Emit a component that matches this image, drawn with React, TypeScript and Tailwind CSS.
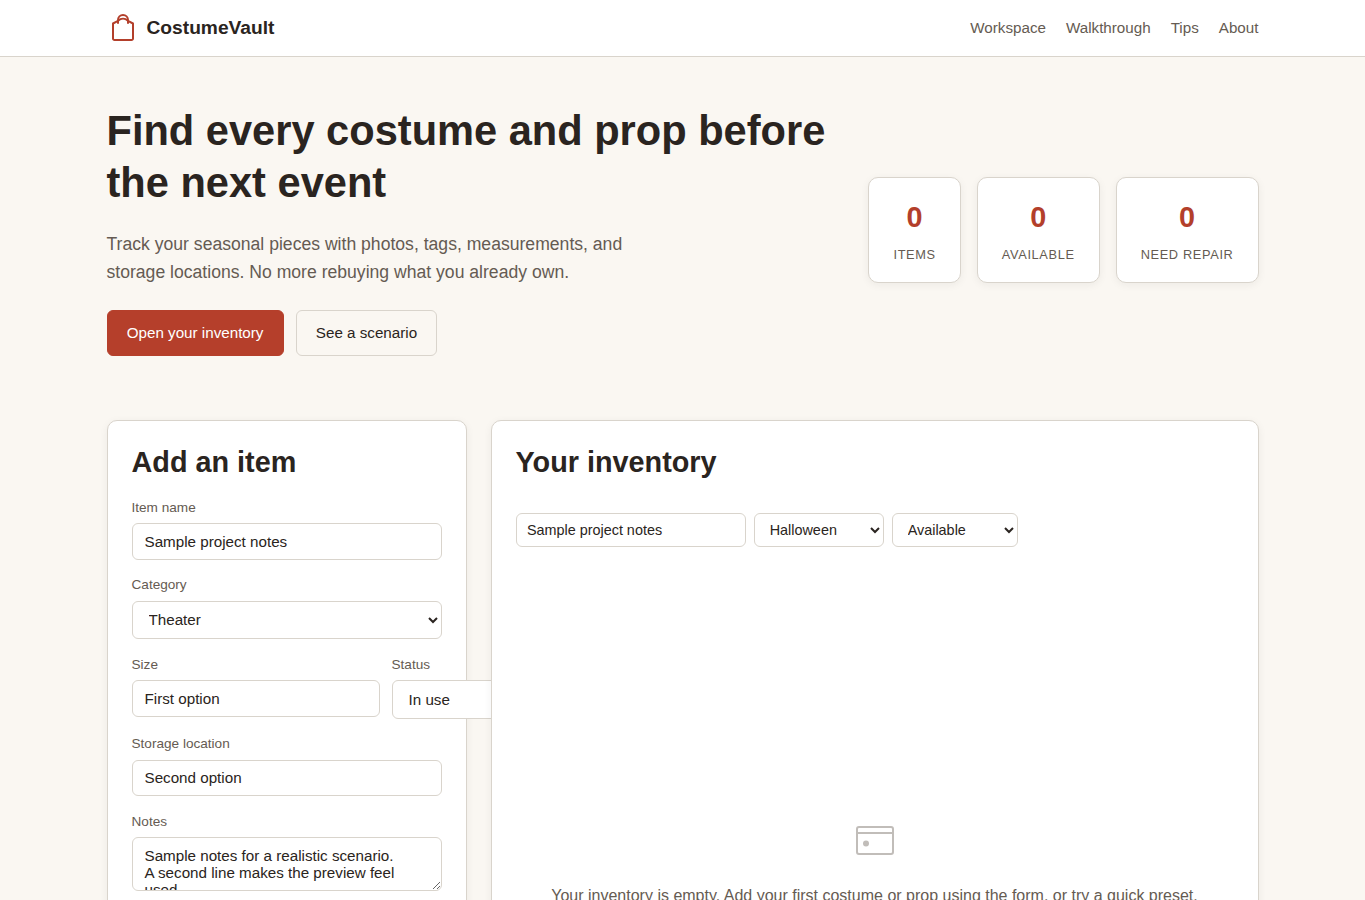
import type { ReactNode } from "react";

const navLinks = ["Workspace", "Walkthrough", "Tips", "About"];

const stats = [
  { value: 0, label: "Items" },
  { value: 0, label: "Available" },
  { value: 0, label: "Need repair" },
];

const inputClass =
  "block w-full rounded-md border border-[#d9d4cc] bg-white px-3 py-[8.8px] text-[15.2px] leading-[normal] text-[#2a2420] outline-none";

const filterClass =
  "h-[34px] rounded-md border border-[#d9d4cc] bg-white text-[14.4px] leading-[normal] text-[#2a2420] outline-none";

function BagIcon() {
  return (
    <svg width="32" height="32" viewBox="0 0 32 32" fill="none" stroke="#b33f2b" strokeWidth="2" strokeLinecap="round" strokeLinejoin="round">
      <path d="M6 11.5 L11 8.9 C14 6 18 6 21 8.9 L26 11.5 V26.5 a1.5 1.5 0 0 1 -1.5 1.5 H7.5 a1.5 1.5 0 0 1 -1.5 -1.5 Z" />
      <path d="M11 11 V8 a5 5 0 0 1 10 0 V11" />
    </svg>
  );
}

function EmptyIcon() {
  return (
    <svg className="opacity-40" width="64" height="64" viewBox="0 0 64 64" fill="none" stroke="#655b52" strokeWidth="2">
      <rect x="14" y="18" width="36" height="27" rx="2" />
      <path d="M14 24h36" />
      <circle cx="23" cy="34.5" r="3" fill="#655b52" stroke="none" />
    </svg>
  );
}

function Field({ label, children }: { label: string; children: ReactNode }) {
  return (
    <label className="block">
      <span className="mb-[4.5px] block pt-[0.3px] text-[13.6px] leading-[21.76px] text-[#655b52]">{label}</span>
      {children}
    </label>
  );
}

function Header() {
  return (
    <header className="h-[57px] border-b border-[#d9d4cc] bg-white">
      <div className="mx-auto flex h-14 max-w-[1200px] items-center justify-between px-6">
        <div className="flex items-center gap-2 text-[19.2px] font-bold">
          <BagIcon />
          <span>CostumeVault</span>
        </div>
        <nav className="flex gap-5 text-[15.2px] text-[#655b52]">
          {navLinks.map((link) => (
            <a key={link} href="#">{link}</a>
          ))}
        </nav>
      </div>
    </header>
  );
}

function Hero() {
  return (
    <section className="flex items-center justify-between gap-10 pt-12 pb-16">
      <div className="flex-1">
        <h1 className="mb-[20.7px] text-[41.6px] leading-[52px] font-bold">
          Find every costume and prop before the next event
        </h1>
        <p className="mb-6 max-w-[540px] text-[17.6px] leading-[28px] text-[#655b52]">
          Track your seasonal pieces with photos, tags, measurements, and storage locations. No more rebuying what you already own.
        </p>
        <div className="flex gap-3 text-[15.2px]">
          <button className="h-[46px] rounded-md border border-[#b53f2b] bg-[#b53f2b] px-[19.2px] pt-px text-white">Open your inventory</button>
          <button className="h-[46px] rounded-md border border-[#d9d4cc] px-[19.2px] pt-px">See a scenario</button>
        </div>
      </div>
      <div className="flex gap-4">
        {stats.map((stat) => (
          <div key={stat.label} className="flex h-[106px] flex-col items-center rounded-[10px] border border-[#d9d4cc] bg-white px-6 pt-[16.5px] shadow-[0_2px_8px_rgba(42,36,32,0.06)]">
            <span className="text-[28.8px] leading-[45px] font-bold text-[#b33f2b]">{stat.value}</span>
            <span className="mt-[5px] text-[12.8px] leading-5 tracking-[0.64px] whitespace-nowrap text-[#655b52] uppercase">{stat.label}</span>
          </div>
        ))}
      </div>
    </section>
  );
}

function ItemForm() {
  return (
    <section className="h-[720px] w-[360px] shrink-0 rounded-[10px] border border-[#d9d4cc] bg-white p-6 shadow-[0_2px_8px_rgba(42,36,32,0.06)]">
      <h2 className="mb-[17.3px] pt-[0.5px] text-[28.8px] leading-[34px] font-bold">Add an item</h2>
      <form className="flex flex-col gap-[14.4px]">
        <Field label="Item name">
          <input className={inputClass} defaultValue="Sample project notes" />
        </Field>
        <Field label="Category">
          <select className={inputClass} defaultValue="Theater">
            <option>Theater</option>
            <option>Halloween</option>
          </select>
        </Field>
        <div className="grid grid-cols-[248px_248px] gap-3">
          <Field label="Size">
            <input className={inputClass} defaultValue="First option" />
          </Field>
          <Field label="Status">
            <select className={inputClass} defaultValue="In use">
              <option>In use</option>
              <option>Available</option>
            </select>
          </Field>
        </div>
        <Field label="Storage location">
          <input className={inputClass} defaultValue="Second option" />
        </Field>
        <Field label="Notes">
          <textarea
            className={`${inputClass} h-[54px] resize-y overflow-hidden`}
            defaultValue={"Sample notes for a realistic scenario.\nA second line makes the preview feel used."}
          />
        </Field>
      </form>
    </section>
  );
}

function Inventory() {
  return (
    <section className="relative z-10 h-[720px] flex-1 rounded-[10px] border border-[#d9d4cc] bg-white p-6 shadow-[0_2px_8px_rgba(42,36,32,0.06)]">
      <h2 className="pt-[0.5px] text-[28.8px] leading-[34px] font-bold">Your inventory</h2>
      <div className="mt-[34px] flex gap-2">
        <input className={`${filterClass} w-[230px] px-[10.4px]`} defaultValue="Sample project notes" />
        <select className={`${filterClass} w-[130px] pr-[10.4px] pl-[11.2px]`} defaultValue="Halloween">
          <option>Halloween</option>
          <option>Theater</option>
        </select>
        <select className={`${filterClass} w-[126px] pr-[10.4px] pl-[11.2px]`} defaultValue="Available">
          <option>Available</option>
          <option>In use</option>
        </select>
      </div>
      <div className="mt-[262px] flex flex-col items-center text-center text-[#655b52]">
        <EmptyIcon />
        <p className="mt-[10px] text-base leading-[25.6px]">
          Your inventory is empty. Add your first costume or prop using the form, or try a quick preset.
        </p>
      </div>
    </section>
  );
}

export default function App() {
  return (
    <div className="h-screen overflow-hidden bg-[#faf7f2] font-['Liberation_Sans',Arial,sans-serif] text-[#2a2420]">
      <Header />
      <main className="mx-auto max-w-[1200px] px-6">
        <Hero />
        <div className="flex items-start gap-6">
          <ItemForm />
          <Inventory />
        </div>
      </main>
    </div>
  );
}
